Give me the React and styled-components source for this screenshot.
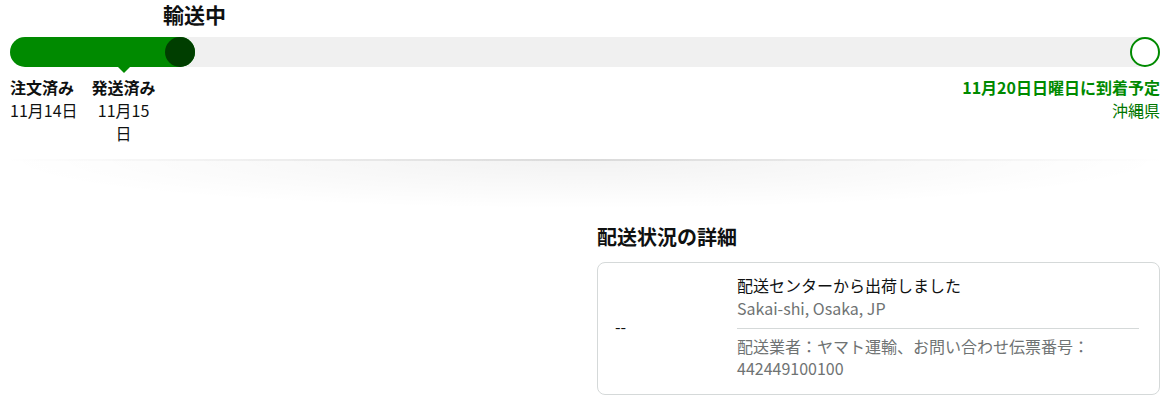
import styled, { createGlobalStyle } from 'styled-components';

const GlobalStyle = createGlobalStyle`
  body {
    margin: 0;
    background: #fff;
    color: #0f1111;
    font-family: "Noto Sans CJK JP", "Noto Sans", sans-serif;
  }
`;

const milestones = [
  { label: '注文済み', date: '11月14日' },
  { label: '発送済み', date: '11月15日', current: true },
];

const App = () => {
  return (
    <Page>
      <GlobalStyle />
      <Tracker>
        <Status>輸送中</Status>
        <Track>
          <Fill>
            <Knob />
          </Fill>
          <EndDot />
        </Track>
        <Labels>
          {milestones.map((m) => (
            <Milestone key={m.label} $current={m.current}>
              <strong>{m.label}</strong>
              <span>{m.date}</span>
            </Milestone>
          ))}
          <Arrival>
            <strong>11月20日日曜日に到着予定</strong>
            <span>沖縄県</span>
          </Arrival>
        </Labels>
      </Tracker>

      <ShadowDivider />

      <Columns>
        <div />
        <section>
          <Heading>配送状況の詳細</Heading>
          <Card>
            <TimeCol>--</TimeCol>
            <EventCol>
              <EventTitle>配送センターから出荷しました</EventTitle>
              <Muted>Sakai-shi, Osaka, JP</Muted>
              <Rule />
              <Muted>配送業者：ヤマト運輸、お問い合わせ伝票番号：</Muted>
              <Muted>442449100100</Muted>
            </EventCol>
          </Card>
        </section>
      </Columns>
    </Page>
  );
};

const Page = styled.div`
  width: 1170px;
  padding: 0 10px;
  box-sizing: border-box;
`;

const Tracker = styled.div`
  display: flex;
  flex-direction: column;
`;

const Status = styled.h2`
  margin: 0;
  padding-left: 153px;
  font-size: 21px;
  font-weight: 700;
  line-height: 28px;
`;

const Track = styled.div`
  margin-top: 9px;
  height: 30px;
  border-radius: 15px;
  background: #f0f0f0;
  display: flex;
  align-items: center;
`;

const Fill = styled.div`
  width: 185px;
  height: 30px;
  border-radius: 15px;
  background: #008a00;
  display: flex;
  justify-content: flex-end;
`;

const Knob = styled.div`
  width: 30px;
  height: 30px;
  border-radius: 50%;
  background: #003e00;
`;

const EndDot = styled.div`
  margin-left: auto;
  width: 26px;
  height: 26px;
  border-radius: 50%;
  border: 2px solid #008a00;
  background: #fff;
`;

const Labels = styled.div`
  margin-top: 9px;
  display: flex;
  align-items: flex-start;
  gap: 14px;
  font-size: 16px;
  line-height: 23px;
`;

const Milestone = styled.div`
  position: relative;
  display: flex;
  flex-direction: column;
  align-items: ${(p) => (p.$current ? 'center' : 'flex-start')};
  text-align: center;
  width: ${(p) => (p.$current ? '64px' : 'auto')};

  strong {
    font-weight: 700;
    white-space: nowrap;
  }

  &::before {
    content: '';
    display: ${(p) => (p.$current ? 'block' : 'none')};
    position: absolute;
    top: -9px;
    left: 50%;
    margin-left: -6px;
    border-left: 6px solid transparent;
    border-right: 6px solid transparent;
    border-top: 6px solid #008a00;
  }
`;

const Arrival = styled.div`
  margin-left: auto;
  display: flex;
  flex-direction: column;
  align-items: flex-end;
  color: #007600;

  strong {
    font-weight: 700;
    color: #008a00;
  }
`;

const ShadowDivider = styled.div`
  margin: 14px -10px 0;
  height: 50px;
  background:
    linear-gradient(to right, rgba(0, 0, 0, 0), rgba(0, 0, 0, 0.1) 50%, rgba(0, 0, 0, 0)) top / 100% 2px no-repeat,
    radial-gradient(farthest-side at 50% 0, rgba(0, 0, 0, 0.05), rgba(0, 0, 0, 0));
`;

const Columns = styled.div`
  display: grid;
  grid-template-columns: 1fr 1fr;
  column-gap: 24px;
`;

const Heading = styled.h3`
  margin: 15px 0 0;
  font-size: 20px;
  font-weight: 700;
  line-height: 26px;
`;

const Card = styled.div`
  margin-top: 12px;
  border: 1px solid #d5d9d9;
  border-radius: 8px;
  padding: 11px 20px 15px 17px;
  display: flex;
  align-items: center;
  font-size: 16px;
  line-height: 23px;
`;

const TimeCol = styled.div`
  width: 122px;
  flex-shrink: 0;
`;

const EventCol = styled.div`
  flex: 1;
  display: flex;
  flex-direction: column;
`;

const EventTitle = styled.div`
  color: #0f1111;
`;

const Muted = styled.div`
  color: #6f7373;
  line-height: 22px;
`;

const Rule = styled.hr`
  width: 100%;
  margin: 9px 0 6px;
  border: 0;
  border-top: 1px solid #d5d9d9;
`;

export default App;
